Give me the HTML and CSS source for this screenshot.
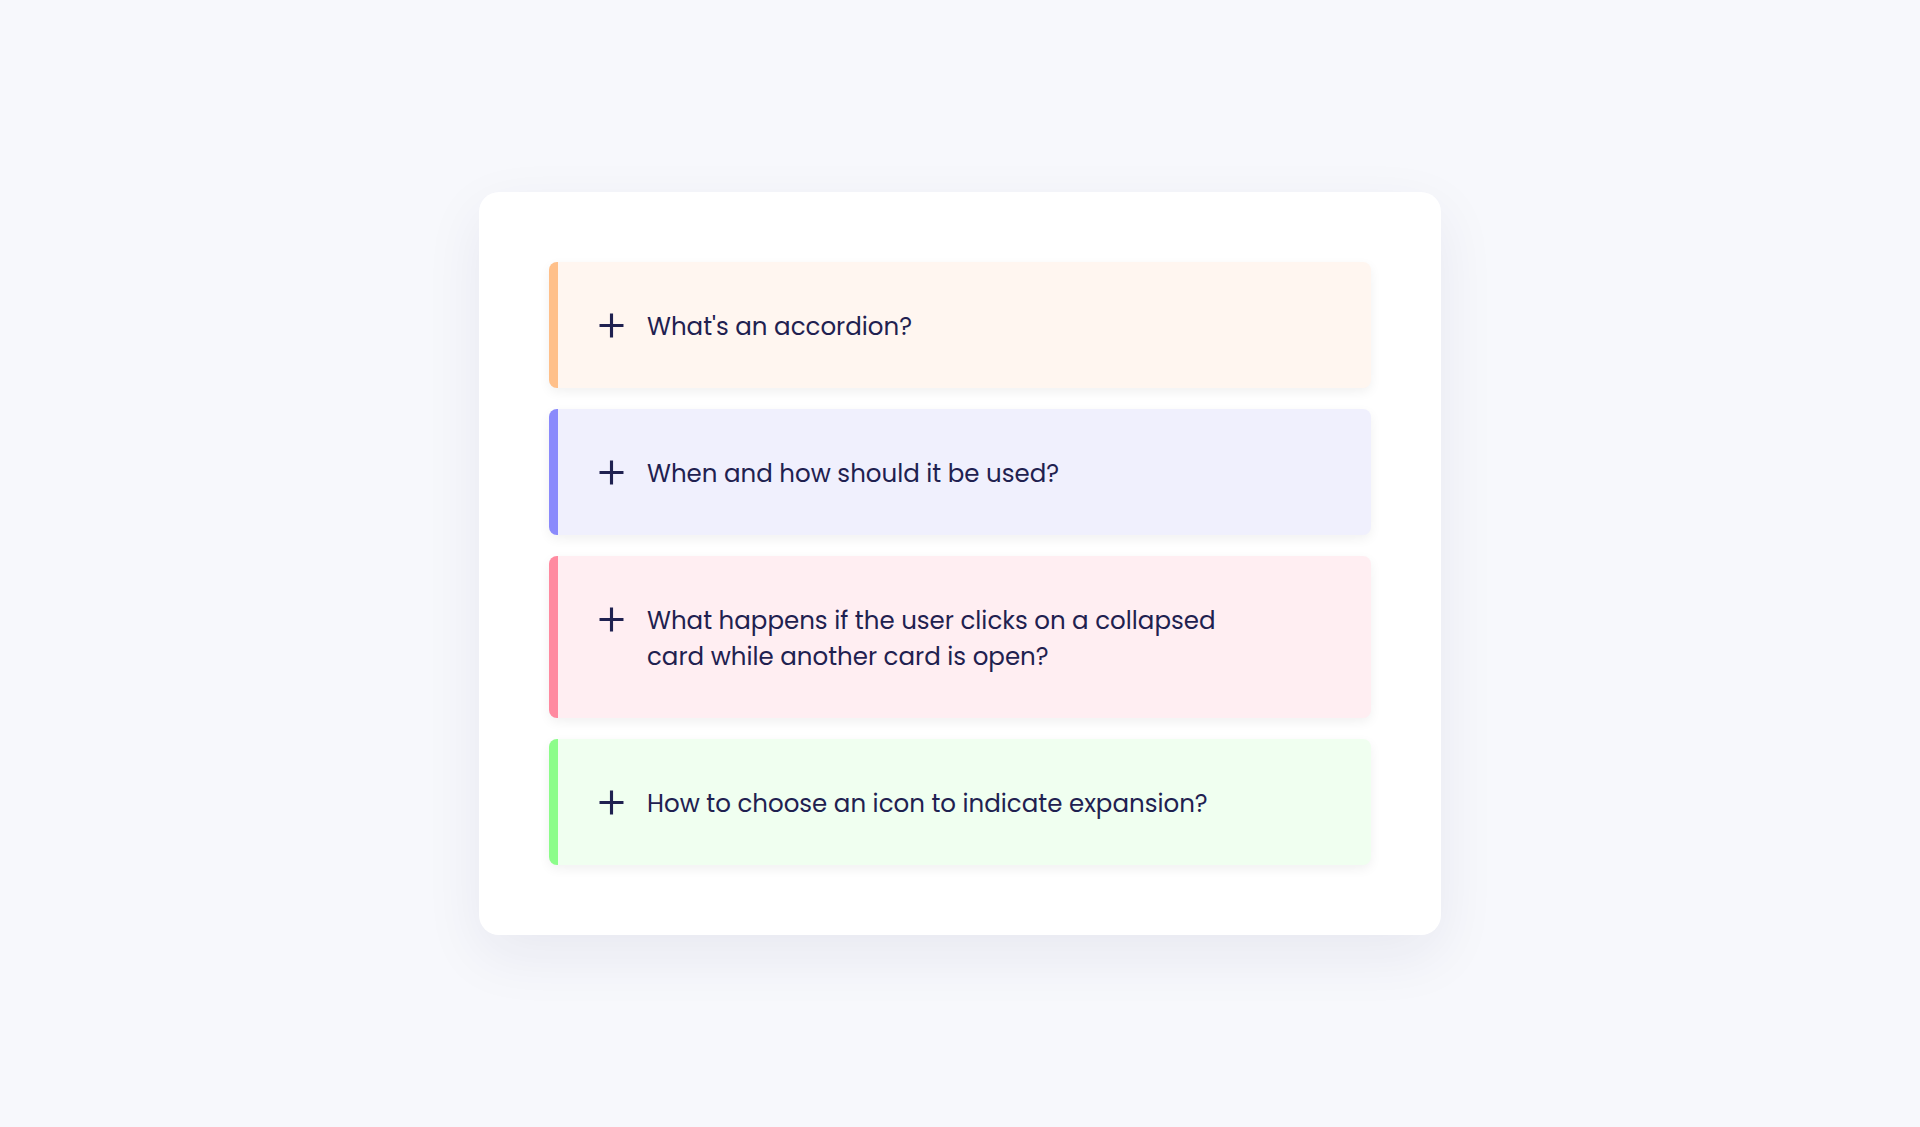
FILE: index.html
```html
<!DOCTYPE html>
<html lang="en">
<head>
<meta charset="utf-8">
<title>Accordion</title>
<link rel="stylesheet" href="styles.css">
</head>
<body>
<main class="page">
  <section class="panel">
    <div class="item item--orange">
      <span class="icon"><svg viewBox="0 0 24 24" width="25" height="25"><path d="M12 0.5v23M0.5 12h23" stroke="currentColor" stroke-width="3" fill="none"/></svg></span>
      <p class="question">What's an accordion?</p>
    </div>
    <div class="item item--violet">
      <span class="icon"><svg viewBox="0 0 24 24" width="25" height="25"><path d="M12 0.5v23M0.5 12h23" stroke="currentColor" stroke-width="3" fill="none"/></svg></span>
      <p class="question">When and how should it be used?</p>
    </div>
    <div class="item item--pink">
      <span class="icon"><svg viewBox="0 0 24 24" width="25" height="25"><path d="M12 0.5v23M0.5 12h23" stroke="currentColor" stroke-width="3" fill="none"/></svg></span>
      <p class="question">What happens if the user clicks on a collapsed card while another card is open?</p>
    </div>
    <div class="item item--green">
      <span class="icon"><svg viewBox="0 0 24 24" width="25" height="25"><path d="M12 0.5v23M0.5 12h23" stroke="currentColor" stroke-width="3" fill="none"/></svg></span>
      <p class="question">How to choose an icon to indicate expansion?</p>
    </div>
  </section>
</main>
</body>
</html>
```
FILE: styles.css
```css
* { box-sizing: border-box; }
html, body { margin: 0; padding: 0; }
body {
  background: #f7f8fc;
  font-family: "Poppins", "Open Sans", "Noto Sans", sans-serif;
  color: #1f2150;
}
.page {
  min-height: 1127px;
  display: flex;
  align-items: center;
  justify-content: center;
}
.panel {
  width: 962px;
  padding: 70px;
  background: #ffffff;
  border-radius: 20px;
  box-shadow: 0 20px 60px rgba(30, 35, 80, 0.07);
  display: flex;
  flex-direction: column;
  gap: 21px;
}
.item {
  display: flex;
  align-items: flex-start;
  gap: 23px;
  padding: 45px 40px 45px 41px;
  border-left: 9px solid;
  border-radius: 8px;
  box-shadow: 0 4px 12px rgba(0, 0, 0, 0.06);
}
.item--orange { background: #fff6f0; border-color: #ffc08a; }
.item--violet { background: #f0f0fd; border-color: #8a8afc; }
.item--pink { background: #ffeef2; border-color: #ff8aa0; }
.item--green { background: #f0fff0; border-color: #8cfd8a; }
.icon {
  flex: none;
  height: 36px;
  display: flex;
  align-items: center;
  color: #1f2150;
}
.icon svg { display: block; }
.question {
  margin: 0;
  padding-top: 2px;
  margin-bottom: -2px;
  max-width: 600px;
  font-size: 24.5px;
  line-height: 36px;
  font-weight: 400;
}
```
